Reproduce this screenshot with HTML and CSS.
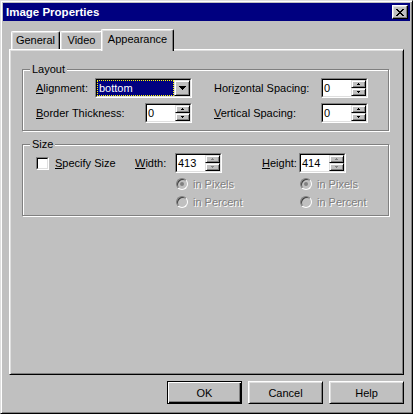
FILE: index.html
```html
<!DOCTYPE html>
<html>
<head>
<meta charset="utf-8">
<title>Image Properties</title>
<link rel="stylesheet" href="styles.css">
</head>
<body>
<div class="window">
  <div class="titlebar">
    <span class="title">Image Properties</span>
    <span class="close">
      <svg width="8" height="7" viewBox="0 0 8 7" shape-rendering="crispEdges"><path d="M0 0h2v1H0zM6 0h2v1H6zM1 1h2v1H1zM5 1h2v1H5zM2 2h4v1H2zM3 3h2v1H3zM2 4h4v1H2zM1 5h2v1H1zM5 5h2v1H5zM0 6h2v1H0zM6 6h2v1H6z" fill="#000"/></svg>
    </span>
  </div>
  <div class="body">
    <div class="tabs">
      <div class="tab tab-general">General</div>
      <div class="tab tab-video">Video</div>
      <div class="tab tab-appearance active">Appearance</div>
    </div>
    <div class="panel">
      <fieldset class="group group-layout">
        <legend>Layout</legend>
        <div class="layout-row">
          <div class="cell cell-left">
            <span class="lbl"><u>A</u>lignment:</span>
            <div class="sunken select">
              <div class="sunken-in sel-in">
                <div class="sel-val"><span>bottom</span></div>
                <div class="dd-btn"><svg width="7" height="4" viewBox="0 0 7 4" shape-rendering="crispEdges"><path d="M0 0h7v1H0zM1 1h5v1H1zM2 2h3v1H2zM3 3h1v1H3z" fill="#000"/></svg></div>
              </div>
            </div>
          </div>
          <div class="cell cell-right">
            <span class="lbl">Hori<u>z</u>ontal Spacing:</span>
            <div class="sunken spin"><div class="sunken-in spin-in"><span class="val">0</span><div class="spin-btns"><div class="sb"><svg width="3" height="2" viewBox="0 0 3 2" shape-rendering="crispEdges"><path d="M1 0h1v1H1zM0 1h3v1H0z" fill="#000"/></svg></div><div class="sb"><svg width="3" height="2" viewBox="0 0 3 2" shape-rendering="crispEdges"><path d="M0 0h3v1H0zM1 1h1v1H1z" fill="#000"/></svg></div></div></div></div>
          </div>
        </div>
        <div class="layout-row">
          <div class="cell cell-left">
            <span class="lbl"><u>B</u>order Thickness:</span>
            <div class="sunken spin"><div class="sunken-in spin-in"><span class="val">0</span><div class="spin-btns"><div class="sb"><svg width="3" height="2" viewBox="0 0 3 2" shape-rendering="crispEdges"><path d="M1 0h1v1H1zM0 1h3v1H0z" fill="#000"/></svg></div><div class="sb"><svg width="3" height="2" viewBox="0 0 3 2" shape-rendering="crispEdges"><path d="M0 0h3v1H0zM1 1h1v1H1z" fill="#000"/></svg></div></div></div></div>
          </div>
          <div class="cell cell-right">
            <span class="lbl"><u>V</u>ertical Spacing:</span>
            <div class="sunken spin"><div class="sunken-in spin-in"><span class="val">0</span><div class="spin-btns"><div class="sb"><svg width="3" height="2" viewBox="0 0 3 2" shape-rendering="crispEdges"><path d="M1 0h1v1H1zM0 1h3v1H0z" fill="#000"/></svg></div><div class="sb"><svg width="3" height="2" viewBox="0 0 3 2" shape-rendering="crispEdges"><path d="M0 0h3v1H0zM1 1h1v1H1z" fill="#000"/></svg></div></div></div></div>
          </div>
        </div>
      </fieldset>

      <fieldset class="group group-size">
        <legend>Size</legend>
        <div class="size-grid">
          <div class="check-cell"><span class="sunken checkbox"><span class="sunken-in check-in"></span></span><span class="lbl"><u>S</u>pecify Size</span></div>
          <div class="lbl-cell"><span class="lbl"><u>W</u>idth:</span></div>
          <div class="spin-cell">
            <div class="sunken spin"><div class="sunken-in spin-in"><span class="val">413</span><div class="spin-btns"><div class="sb"><svg width="3" height="2" viewBox="0 0 3 2" shape-rendering="crispEdges"><path d="M1 0h1v1H1zM0 1h3v1H0z" fill="#808080"/></svg></div><div class="sb"><svg width="3" height="2" viewBox="0 0 3 2" shape-rendering="crispEdges"><path d="M0 0h3v1H0zM1 1h1v1H1z" fill="#808080"/></svg></div></div></div></div>
          </div>
          <div class="lbl-cell"><span class="lbl"><u>H</u>eight:</span></div>
          <div class="spin-cell">
            <div class="sunken spin"><div class="sunken-in spin-in"><span class="val">414</span><div class="spin-btns"><div class="sb"><svg width="3" height="2" viewBox="0 0 3 2" shape-rendering="crispEdges"><path d="M1 0h1v1H1zM0 1h3v1H0z" fill="#808080"/></svg></div><div class="sb"><svg width="3" height="2" viewBox="0 0 3 2" shape-rendering="crispEdges"><path d="M0 0h3v1H0zM1 1h1v1H1z" fill="#808080"/></svg></div></div></div></div>
          </div>

          <div class="radio-cell col-w"><span class="radio"><span class="dot"></span></span><span class="lbl disabled">in Pixels</span></div>
          <div class="radio-cell col-h"><span class="radio"><span class="dot"></span></span><span class="lbl disabled">in Pixels</span></div>
          <div class="radio-cell col-w"><span class="radio"></span><span class="lbl disabled">in Percent</span></div>
          <div class="radio-cell col-h"><span class="radio"></span><span class="lbl disabled">in Percent</span></div>
        </div>
      </fieldset>
    </div>
    <div class="buttons">
      <div class="btn default">OK</div>
      <div class="btn">Cancel</div>
      <div class="btn">Help</div>
    </div>
  </div>
</div>
</body>
</html>
```

FILE: styles.css
```css
* { box-sizing: border-box; }
html, body { margin: 0; padding: 0; }
body {
  width: 413px;
  height: 414px;
  overflow: hidden;
  background: #c0c0c0;
  font-family: "Liberation Sans", Arial, sans-serif;
  font-size: 11px;
  color: #000;
}
u { text-decoration: underline; text-underline-offset: 1px; }

.window {
  width: 413px;
  height: 414px;
  border: 1px solid;
  border-color: #dfdfdf #000 #000 #dfdfdf;
  box-shadow: inset 1px 1px #fff, inset -1px -1px #808080;
  padding: 2px;
  display: flex;
  flex-direction: column;
  background: #c0c0c0;
}

.titlebar {
  height: 18px;
  flex: none;
  background: #000080;
  color: #fff;
  display: flex;
  align-items: center;
  justify-content: space-between;
  padding: 0 2px 0 3px;
}
.title {
  font-weight: bold;
  font-size: 11.5px;
  line-height: 14px;
}
.close {
  width: 16px;
  height: 14px;
  background: #c0c0c0;
  border: 1px solid;
  border-color: #fff #000 #000 #fff;
  box-shadow: inset -1px -1px #808080, inset 1px 1px #dfdfdf;
  display: flex;
  align-items: center;
  justify-content: center;
  padding-left: 0;
}
.close svg { display: block; margin-left: 0; }

.body {
  flex: 1;
  display: flex;
  flex-direction: column;
  padding: 8px 6px 0 6px;
}

.tabs {
  height: 20px;
  display: flex;
  align-items: flex-end;
  padding-left: 2px;
  flex: none;
}
.tab {
  height: 18px;
  background: #c0c0c0;
  border-top: 1px solid #fff;
  border-left: 1px solid #fff;
  border-right: 1px solid #000;
  border-radius: 2px 2px 0 0;
  box-shadow: inset -1px 0 #808080, inset 1px 1px #dfdfdf;
  text-align: center;
  line-height: 15px;
  padding-top: 1px;
}
.tab-general { width: 49px; }
.tab-video { width: 43px; }
.tab-appearance { width: 73px; }
.tab.active {
  height: 22px;
  margin-left: -2px;
  margin-bottom: -2px;
  position: relative;
  z-index: 1;
  line-height: 15px;
  padding-top: 2px;
}

.panel {
  height: 326px;
  flex: none;
  border: 1px solid;
  border-color: #fff #000 #000 #fff;
  box-shadow: inset 1px 1px #dfdfdf, inset -1px -1px #808080;
  padding: 13px 12px 0 12px;
}

.group {
  width: 367px;
  margin: 0;
  border: 1px solid #808080;
  box-shadow: inset 1px 1px #fff, 1px 1px #fff;
  min-width: 0;
}
.group legend {
  padding: 0 2px;
  margin-left: -6px;
  line-height: 13px;
  background: #c0c0c0;
}
.group-layout {
  padding: 2px 0 7px 13px;
  display: flex;
  flex-direction: column;
  gap: 5px;
}
.group-size {
  margin-top: 7px;
  padding: 2px 0 4px 13px;
}

.layout-row {
  display: flex;
  gap: 22px;
  height: 20px;
}
.cell {
  display: flex;
  align-items: center;
  justify-content: space-between;
}
.cell-left { width: 156px; }
.cell-right { width: 154px; }
.lbl { line-height: 13px; white-space: nowrap; }

.sunken {
  border: 1px solid;
  border-color: #808080 #fff #fff #808080;
}
.sunken-in {
  border: 1px solid;
  border-color: #000 #dfdfdf #dfdfdf #000;
  height: 100%;
}

.select { width: 97px; height: 20px; }
.sel-in { display: flex; background: #fff; }
.sel-val {
  flex: 1;
  background: #000080;
  color: #fff;
  border: 1px dotted #ffff00;
  margin: 0;
  line-height: 14px;
  padding-left: 1px;
}
.dd-btn {
  width: 16px;
  height: 16px;
  background: #c0c0c0;
  border: 1px solid;
  border-color: #dfdfdf #000 #000 #dfdfdf;
  box-shadow: inset 1px 1px #fff, inset -1px -1px #808080;
  display: flex;
  align-items: center;
  justify-content: center;
}
.dd-btn svg { display: block; }

.spin { width: 47px; height: 20px; }
.spin-in { display: flex; background: #fff; }
.spin .val {
  flex: 1;
  line-height: 16px;
  padding-left: 1px;
}
.spin-btns {
  width: 15px;
  display: flex;
  flex-direction: column;
}
.sb {
  flex: 1;
  background: #c0c0c0;
  border: 1px solid;
  border-color: #dfdfdf #000 #000 #dfdfdf;
  box-shadow: inset 1px 1px #fff, inset -1px -1px #808080;
  display: flex;
  align-items: center;
  justify-content: center;
}
.sb svg { display: block; }

.size-grid {
  display: grid;
  grid-template-columns: 99px 40px 87px 37px 1fr;
  grid-template-rows: 22px 18px 18px;
}
.check-cell, .lbl-cell, .spin-cell {
  height: 20px;
  display: flex;
  align-items: center;
}
.checkbox { width: 13px; height: 13px; display: block; }
.check-in { display: block; background: #fff; }
.check-cell .lbl { margin-left: 6px; }

.radio-cell {
  display: flex;
  align-items: center;
  padding-left: 1px;
}
.col-w { grid-column: 3; }
.col-h { grid-column: 5; }
.radio {
  width: 12px;
  height: 12px;
  border-radius: 50%;
  border: 1px solid;
  border-color: #808080 #fff #fff #808080;
  box-shadow: inset 1px 1px #404040;
  background: #c0c0c0;
  display: flex;
  align-items: center;
  justify-content: center;
  flex: none;
}
.radio .dot {
  width: 4px;
  height: 4px;
  border-radius: 50%;
  background: #808080;
}
.radio-cell .lbl { margin-left: 5px; }
.disabled { color: #808080; text-shadow: 1px 1px #fff; }

.buttons {
  display: flex;
  justify-content: flex-end;
  gap: 6px;
  margin-top: 6px;
}
.btn {
  width: 75px;
  height: 23px;
  border: 1px solid;
  border-color: #fff #000 #000 #fff;
  box-shadow: inset 1px 1px #dfdfdf, inset -1px -1px #808080;
  display: flex;
  align-items: center;
  justify-content: center;
}
.btn.default {
  border-color: #000;
  box-shadow: inset 1px 1px #fff, inset -1px -1px #000, inset -2px -2px #808080;
}
```
